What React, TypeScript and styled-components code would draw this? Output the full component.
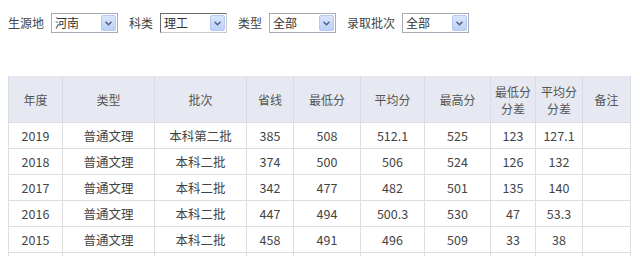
import React from 'react';
import styled, { createGlobalStyle } from 'styled-components';

const GlobalStyle = createGlobalStyle`
    body {
        margin: 0;
        background: #fff;
        font-family: 'Noto Sans CJK SC', 'Noto Sans', sans-serif;
        font-size: 12px;
        color: #444;
    }
`;

type Row = {
    year: string;
    type: string;
    batch: string;
    line: string;
    min: string;
    avg: string;
    max: string;
    minDiff: string;
    avgDiff: string;
};

const rows: Row[] = [
    { year: '2019', type: '普通文理', batch: '本科第二批', line: '385', min: '508', avg: '512.1', max: '525', minDiff: '123', avgDiff: '127.1' },
    { year: '2018', type: '普通文理', batch: '本科二批', line: '374', min: '500', avg: '506', max: '524', minDiff: '126', avgDiff: '132' },
    { year: '2017', type: '普通文理', batch: '本科二批', line: '342', min: '477', avg: '482', max: '501', minDiff: '135', avgDiff: '140' },
    { year: '2016', type: '普通文理', batch: '本科二批', line: '447', min: '494', avg: '500.3', max: '530', minDiff: '47', avgDiff: '53.3' },
    { year: '2015', type: '普通文理', batch: '本科二批', line: '458', min: '491', avg: '496', max: '509', minDiff: '33', avgDiff: '38' },
];

const colWidths = [54, 92, 92, 47, 67, 64, 66, 45, 47, 48];

const filters = [
    { label: '生源地', value: '河南', focused: false },
    { label: '科类', value: '理工', focused: true },
    { label: '类型', value: '全部', focused: false },
    { label: '录取批次', value: '全部', focused: false },
];

export default function App() {
    return (
        <>
            <GlobalStyle />
            <FilterBar>
                {filters.map((f) => (
                    <React.Fragment key={f.label}>
                        <Label>{f.label}</Label>
                        <Select $focused={f.focused}>
                            <span>{f.value}</span>
                            <DropButton>
                                <svg width="7" height="5" viewBox="0 0 7 5">
                                    <path d="M0.5 0.8 L3.5 3.8 L6.5 0.8" fill="none" stroke="#4d6185" strokeWidth="1.4" />
                                </svg>
                            </DropButton>
                        </Select>
                    </React.Fragment>
                ))}
            </FilterBar>
            <Table>
                <colgroup>
                    {colWidths.map((w, i) => (
                        <col key={i} style={{ width: w }} />
                    ))}
                </colgroup>
                <thead>
                    <tr>
                        <Th>年度</Th>
                        <Th>类型</Th>
                        <Th>批次</Th>
                        <Th>省线</Th>
                        <Th>最低分</Th>
                        <Th>平均分</Th>
                        <Th>最高分</Th>
                        <Th>
                            最低分
                            <br />
                            分差
                        </Th>
                        <Th>
                            平均分
                            <br />
                            分差
                        </Th>
                        <Th>备注</Th>
                    </tr>
                </thead>
                <tbody>
                    {rows.map((r) => (
                        <tr key={r.year}>
                            <Td>{r.year}</Td>
                            <Td>{r.type}</Td>
                            <Td>{r.batch}</Td>
                            <Td>{r.line}</Td>
                            <Td>{r.min}</Td>
                            <Td>{r.avg}</Td>
                            <Td>{r.max}</Td>
                            <Td>{r.minDiff}</Td>
                            <Td>{r.avgDiff}</Td>
                            <Td></Td>
                        </tr>
                    ))}
                    <tr>
                        {colWidths.map((_, i) => (
                            <Td key={i}>&nbsp;</Td>
                        ))}
                    </tr>
                </tbody>
            </Table>
        </>
    );
}

const FilterBar = styled.div`
    display: flex;
    align-items: center;
    height: 20px;
    margin-top: 13px;
    padding-left: 8px;
`;

const Label = styled.span`
    margin-right: 7px;
    color: #444;
    line-height: 20px;
`;

const Select = styled.div<{ $focused: boolean }>`
    box-sizing: border-box;
    display: flex;
    align-items: center;
    justify-content: space-between;
    width: 67px;
    height: 20px;
    margin-right: 11px;
    padding: 0 1px 0 3px;
    background: #fff;
    border: 1px solid ${(p) => (p.$focused ? '#6b6b6b' : '#a5acb5')};
    border-right-color: ${(p) => (p.$focused ? '#c9c9c9' : '#a5acb5')};
    border-bottom-color: ${(p) => (p.$focused ? '#c9c9c9' : '#a5acb5')};
    color: #333;
    line-height: 18px;
`;

const DropButton = styled.div`
    box-sizing: border-box;
    display: flex;
    align-items: center;
    justify-content: center;
    width: 15px;
    height: 16px;
    background: linear-gradient(#d9e5fb, #bcd0f7);
    border: 1px solid #b5c8ef;
    border-radius: 2px;
`;

const Table = styled.table`
    margin: 43px 0 0 8px;
    width: 622px;
    table-layout: fixed;
    border-collapse: collapse;
    border-top: 1px solid #e3e5ea;
`;

const Th = styled.th`
    height: 45px;
    padding: 0;
    background: #e6e9f1;
    border: 1px solid #d9dce4;
    border-top: none;
    color: #555;
    font-weight: normal;
    font-size: 12px;
    line-height: 17px;
    text-align: center;
`;

const Td = styled.td`
    height: 25px;
    padding: 0;
    border: 1px solid #dedede;
    color: #444;
    font-size: 12.5px;
    text-align: center;
`;
